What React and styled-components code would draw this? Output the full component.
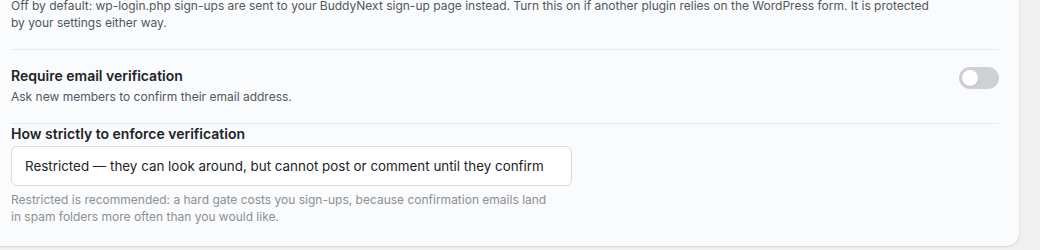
import React, { useState } from 'react'
import styled, { createGlobalStyle } from 'styled-components'

const GlobalStyle = createGlobalStyle`
  html, body {
    margin: 0;
    padding: 0;
    background: #f0f0f1;
    font-family: Inter, "Noto Sans", "Liberation Sans", sans-serif;
    -webkit-font-smoothing: antialiased;
  }
`

function App() {
  const [verify, setVerify] = useState(false)
  const [mode, setMode] = useState('restricted')

  return (
    <>
      <GlobalStyle />
      <Page>
        <Card>
          <Row>
            <Description $wide>
              Off by default: wp-login.php sign-ups are sent to your BuddyNext sign-up page instead.
              Turn this on if another plugin relies on the WordPress form. It is protected by your
              settings either way.
            </Description>
          </Row>

          <Row>
            <RowText>
              <Title>Require email verification</Title>
              <Description>Ask new members to confirm their email address.</Description>
            </RowText>
            <Toggle
              type="button"
              role="switch"
              aria-checked={verify}
              $on={verify}
              onClick={() => setVerify(!verify)}
            >
              <Knob $on={verify} />
            </Toggle>
          </Row>

          <SubField>
            <Title>How strictly to enforce verification</Title>
            <Select value={mode} onChange={(e) => setMode(e.target.value)}>
              <option value="restricted">
                Restricted — they can look around, but cannot post or comment until they confirm
              </option>
              <option value="hard">Hard gate — no access until they confirm</option>
              <option value="none">Reminder only</option>
            </Select>
            <Help>
              Restricted is recommended: a hard gate costs you sign-ups, because confirmation
              emails land in spam folders more often than you would like.
            </Help>
          </SubField>
        </Card>
      </Page>
    </>
  )
}

const Page = styled.div`
  width: 1040px;
  height: 250px;
  overflow: hidden;
  background: #f0f0f1;
`

const Card = styled.div`
  margin: -19px 21px 0 -10px;
  padding: 0 20px 21px 21px;
  background: #fafbfc;
  border-radius: 0 0 13px 13px;
  box-shadow: 0 1px 2px rgba(0, 0, 0, 0.08), 0 0 0 1px rgba(0, 0, 0, 0.03);
`

const Row = styled.div`
  display: flex;
  align-items: flex-start;
  justify-content: space-between;
  gap: 24px;
  padding: 16px 0 18px;
  border-bottom: 1px solid #e8eaed;
`

const RowText = styled.div`
  display: flex;
  flex-direction: column;
  gap: 3px;
`

const Title = styled.div`
  font-size: 14px;
  line-height: 19px;
  font-weight: 600;
  color: #1d2327;
`

const Description = styled.p`
  margin: 0;
  font-size: 12px;
  line-height: 17px;
  color: #50575e;
  max-width: ${(p) => (p.$wide ? '930px' : 'none')};
`

const Toggle = styled.button`
  flex: none;
  position: relative;
  width: 40px;
  height: 22px;
  margin-top: 1px;
  padding: 0;
  border: none;
  border-radius: 11px;
  background: ${(p) => (p.$on ? '#2271b1' : '#cdd0d4')};
  cursor: pointer;
`

const Knob = styled.span`
  position: absolute;
  top: 3px;
  left: ${(p) => (p.$on ? '21px' : '3px')};
  width: 16px;
  height: 16px;
  border-radius: 50%;
  background: #fff;
  box-shadow: 0 1px 1px rgba(0, 0, 0, 0.1);
`

const SubField = styled.div`
  display: flex;
  flex-direction: column;
  align-items: flex-start;
`

const Select = styled.select`
  appearance: none;
  box-sizing: border-box;
  margin-top: 3px;
  width: 561px;
  height: 40px;
  padding: 0 13px;
  border: 1px solid #dcdcde;
  border-radius: 6px;
  background: #fff;
  font-family: inherit;
  font-size: 13.4px;
  color: #1d2327;
  outline: none;
`

const Help = styled.p`
  margin: 5px 0 0;
  max-width: 545px;
  font-size: 12px;
  line-height: 17px;
  color: #8c8f94;
`

export default App
